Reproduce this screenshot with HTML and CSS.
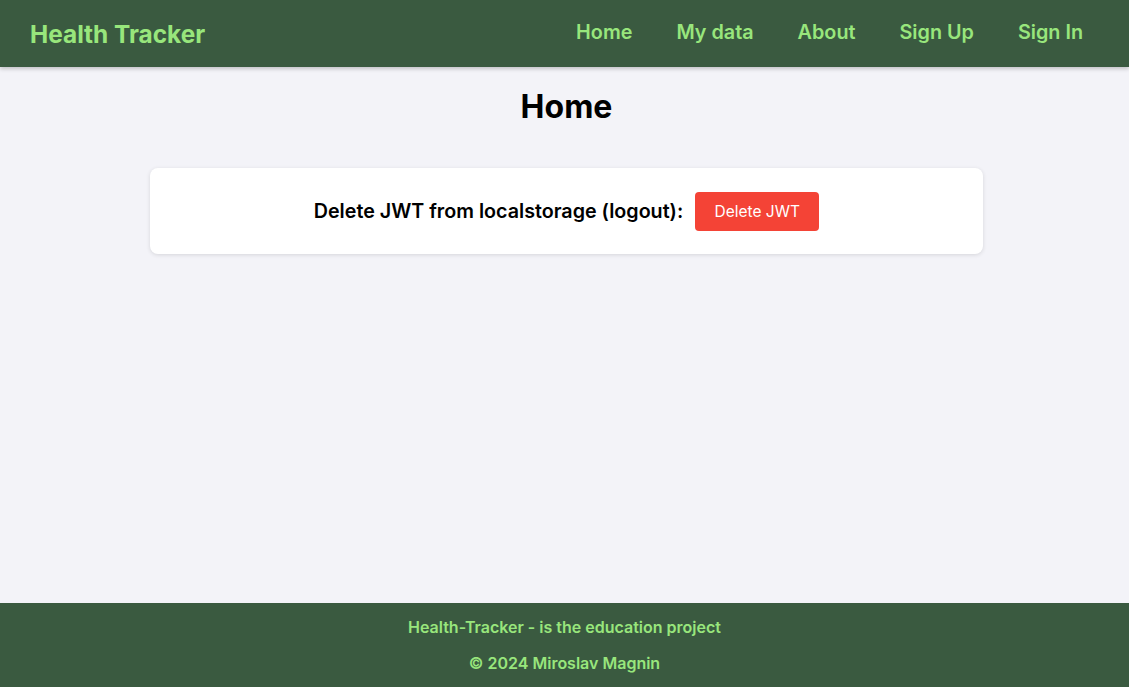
FILE: index.html
```html
<!DOCTYPE html>
<html lang="en">
<head>
<meta charset="utf-8">
<title>Health Tracker</title>
<link rel="stylesheet" href="styles.css">
</head>
<body>
<div class="page">
  <header class="topbar">
    <a class="logo" href="#">Health Tracker</a>
    <nav class="nav">
      <a href="#">Home</a>
      <a href="#">My data</a>
      <a href="#">About</a>
      <a href="#">Sign Up</a>
      <a href="#">Sign In</a>
    </nav>
  </header>
  <main class="main">
    <h1 class="title">Home</h1>
    <section class="card">
      <span class="card-label">Delete JWT from localstorage (logout):</span>
      <button class="btn-danger" type="button">Delete JWT</button>
    </section>
  </main>
  <footer class="footer">
    <p>Health-Tracker - is the education project</p>
    <p>© 2024 Miroslav Magnin</p>
  </footer>
</div>
</body>
</html>
```
FILE: styles.css
```css
* { box-sizing: border-box; }
html, body { margin: 0; padding: 0; height: 100%; }
body {
  font-family: Inter, "Noto Sans", "Liberation Sans", sans-serif;
  background: #f3f3f8;
  color: #000;
}
.page {
  min-height: 100%;
  display: flex;
  flex-direction: column;
}
.topbar {
  height: 67px;
  background: #3a5a40;
  display: flex;
  align-items: center;
  justify-content: space-between;
  padding: 0 24px 0 30px;
  box-shadow: 0 2px 4px rgba(0,0,0,0.2);
  position: relative;
  z-index: 1;
}
.logo {
  color: #98e67c;
  text-decoration: none;
  font-weight: 700;
  font-size: 24.4px;
}
.nav { display: flex; margin-bottom: 4px; }
.nav a {
  color: #98e67c;
  text-decoration: none;
  font-weight: 600;
  font-size: 19.8px;
  padding: 0 22px;
}
.main {
  flex: 1;
  display: flex;
  flex-direction: column;
  align-items: center;
  padding-left: 4px;
}
.title {
  margin: 22px 0 43px;
  font-size: 32px;
  font-weight: 700;
  line-height: 36px;
}
.card {
  width: 833px;
  height: 86px;
  background: #fff;
  border-radius: 8px;
  box-shadow: 0 1px 4px rgba(0,0,0,0.12);
  display: flex;
  align-items: center;
  justify-content: center;
  gap: 12px;
}
.card-label {
  font-size: 19.7px;
  font-weight: 600;
}
.btn-danger {
  background: #f44336;
  color: #fff;
  border: none;
  border-radius: 4px;
  height: 39px;
  width: 124px;
  font-family: inherit;
  font-size: 15.5px;
}
.footer {
  height: 84px;
  background: #3a5a40;
  color: #98e67c;
  display: flex;
  flex-direction: column;
  align-items: center;
  justify-content: center;
  gap: 16px;
  font-size: 16px;
  font-weight: 600;
}
.footer p { margin: 0; }
```
